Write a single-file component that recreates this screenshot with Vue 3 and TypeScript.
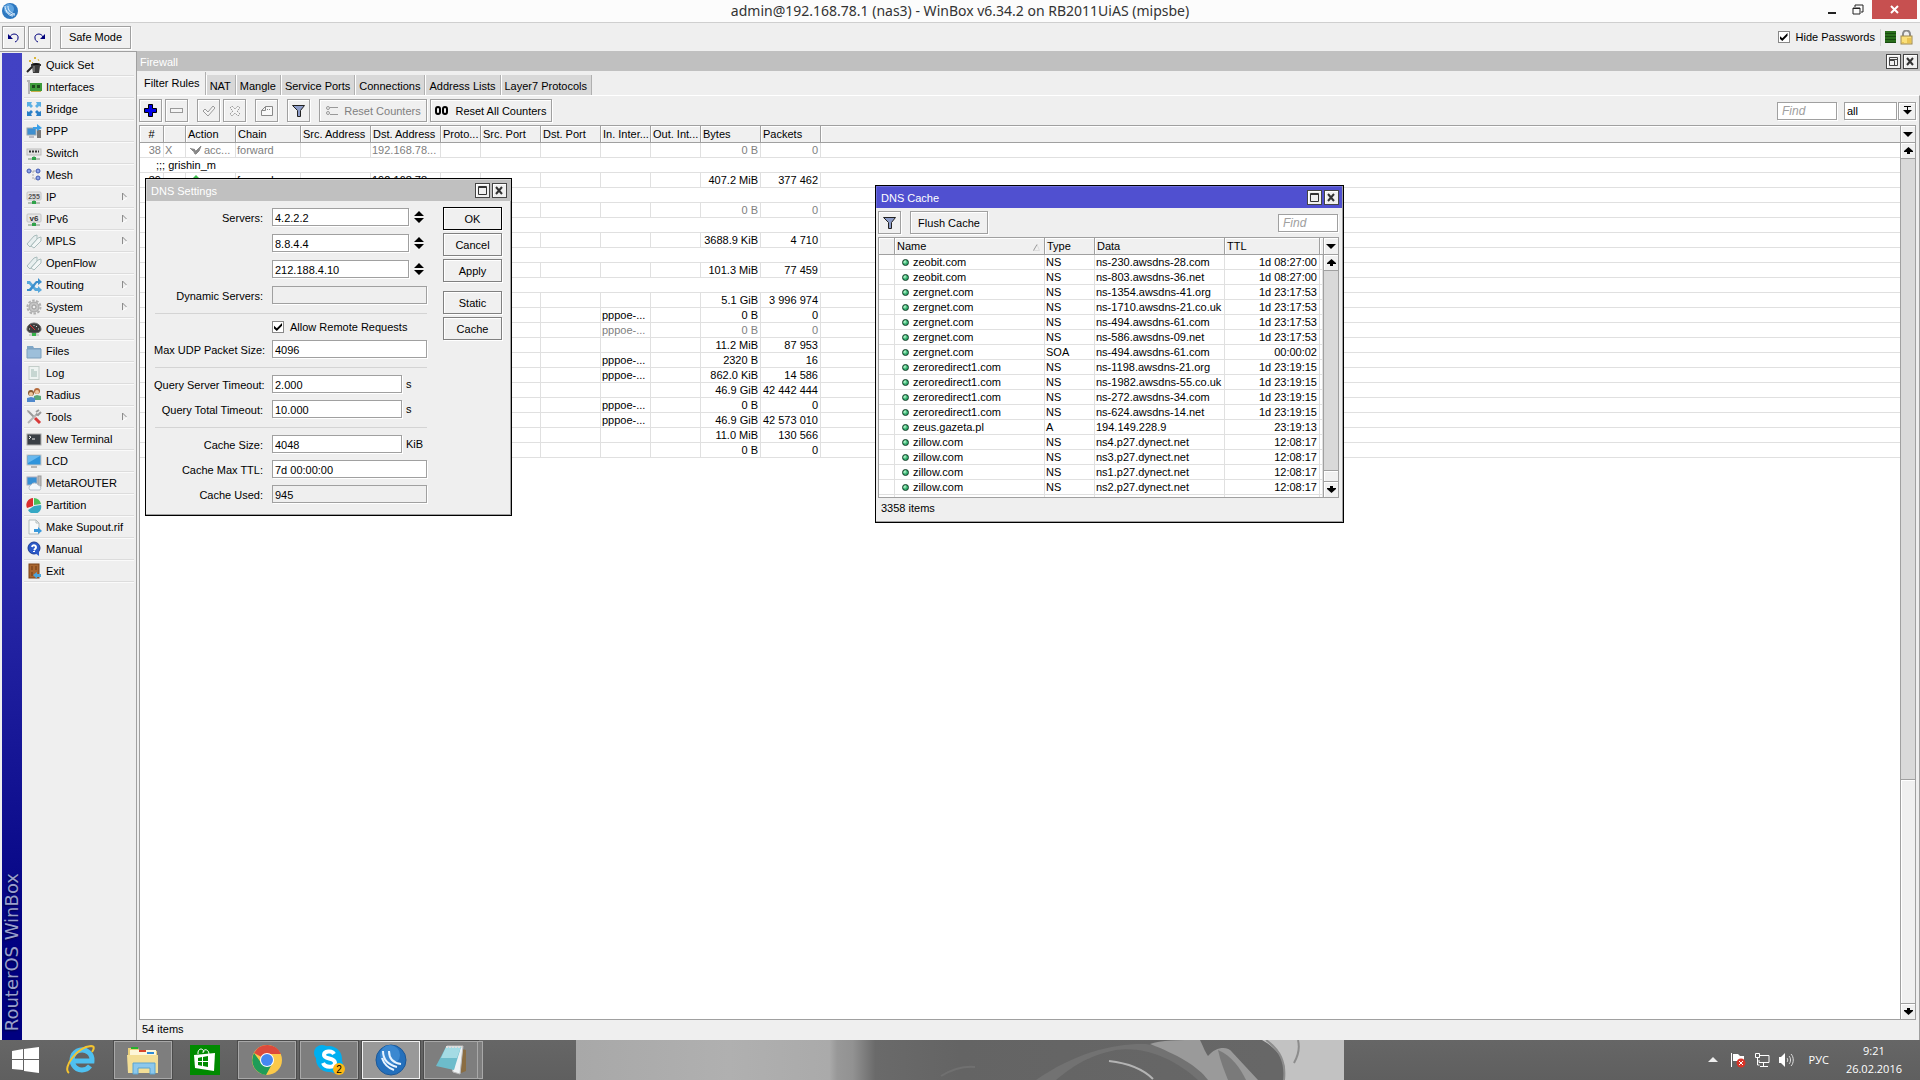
<script setup lang="ts">
import { ref } from 'vue'

interface MenuItem { label: string; icon: string; sub?: boolean }
interface Column { label: string; width?: number }
interface Rule {
  comment?: string
  disabled?: boolean
  cells?: string[]
  bytes?: string
  packets?: string
  iface?: string
}
interface DnsEntry { name: string; type: string; data: string; ttl: string }

const plug = '<path d="M8 11v3M2 14h4M10 14h4" stroke="#7a8f7a" stroke-width="1"/><rect x="6" y="12" width="4" height="3" fill="#2fa34a"/>'

const icons: Record<string, string> = {
  wand: '<path d="M1 15L7 9" stroke="#222" stroke-width="2"/><path d="M5 7h10v2h-1l-1 7H7L6 9H5z" fill="#3a3a3a"/><path d="M8 9v6" stroke="#999"/><ellipse cx="10" cy="7" rx="4" ry="1" fill="#111"/><path d="M3 4l1 1 1-1-1-1zM8 1l1 1 1-1-1-1zM6 5l1 1M12 2l1 2" stroke="#d8b53a" fill="#e9c94c"/>',
  card: '<path d="M1 2h2v13" fill="none" stroke="#b5b5b5" stroke-width="2"/><rect x="4" y="4" width="12" height="8" fill="#3d9a3a"/><path d="M6 6h3v3H6zM11 6h3v3h-3z" fill="#1c4a1c"/><path d="M5 12.500h10" stroke="#c9b04a"/>',
  bridge: '<g fill="#5bb0e4"><path d="M1 1h5L5 3l2 2-2 2-2-2-2 1z"/><path d="M15 1h-5l1 2-2 2 2 2 2-2 2 1z"/></g><g fill="#2a80c8"><path d="M1 15h5l-1-2 2-2-2-2-2 2-2-1z"/><path d="M15 15h-5l1-2-2-2 2-2 2 2 2-1z"/></g>',
  ppp: '<rect x="1" y="5" width="9" height="7" fill="#3e8fd0" stroke="#9aa5ad"/><path d="M3 14h5" stroke="#889"/><rect x="11" y="7" width="4" height="8" fill="#777"/><path d="M7 4h4V1l5 4-5 3V6H7z" fill="#3aa0e8"/>',
  switch: '<rect x="1" y="4" width="14" height="6" fill="#e2e2e2" stroke="#bbb"/><path d="M3 6.500h10" stroke="#333" stroke-width="2" stroke-dasharray="2 1"/>' + plug,
  mesh: '<path d="M4 4h8M7 4v8h5" fill="none" stroke="#aaa" stroke-dasharray="2 1"/><g fill="#8ea4e8" stroke="#4058b0"><circle cx="3" cy="4" r="2"/><circle cx="12" cy="4" r="2"/><circle cx="12" cy="11" r="2"/></g>',
  ip: '<rect x="1" y="3" width="14" height="8" rx="1" fill="#e6e6e6" stroke="#c4c4c4"/><text x="8" y="10" font-size="7" font-weight="700" text-anchor="middle" fill="#555">255</text>' + plug,
  ipv6: '<rect x="1" y="3" width="14" height="8" rx="1" fill="#e6e6e6" stroke="#c4c4c4"/><text x="8" y="10" font-size="8" font-weight="700" text-anchor="middle" fill="#333">v6</text>' + plug,
  tags: '<path d="M1 11L8 3l3-1v4l-7 8z" fill="#e8efef" stroke="#a9bcbc"/><path d="M5 13l7-8 3-1v4l-7 7z" fill="#f2f6f6" stroke="#a9bcbc"/>',
  routing: '<path d="M1 4h3l6 7h2V9l4 4-4 3v-2H9L3 7H1z" fill="#58a8dc"/><path d="M1 12h2l7-8h2V1l4 4-4 3V6h-1l-6 8H1z" fill="#3c8fcc"/>',
  gear: '<circle cx="8" cy="8" r="5" fill="#c4c4c4" stroke="#a4a4a4" stroke-width="1"/><circle cx="8" cy="8" r="6.500" fill="none" stroke="#b0b0b0" stroke-width="2" stroke-dasharray="2.500 1.500"/><circle cx="8" cy="8" r="2" fill="#eee" stroke="#999"/>',
  gauge: '<path d="M1 8a7 6 0 0 1 14 0c0 3-3 4-7 4s-7-1-7-4z" fill="#3c3c3c" stroke="#666"/><path d="M4 4l5 5" stroke="#e03030"/><path d="M3 8h1M12 8h1M8 4v1M11 5l-1 1" stroke="#ddd"/><path d="M3 14h10" stroke="#aaa"/><rect x="6" y="12" width="4" height="3" fill="#36b24a"/>',
  folder: '<path d="M1 3h6l1 2h7v10H1z" fill="#7fa6c6"/><path d="M1 6h14v9H1z" fill="#9dbfda" stroke="#7d9fbd"/>',
  log: '<path d="M3 1l1 1 1-1 1 1 1-1 1 1 1-1 1 1 1-1 1 1 1-1v14l-1-1-1 1-1-1-1 1-1-1-1 1-1-1-1 1-1-1-1 1z" fill="#eef3f1" stroke="#c3cdc9" stroke-width="1"/><path d="M5 5h3M5 7h6M5 9h6M5 11h6" stroke="#9fb9b2"/>',
  users: '<circle cx="11" cy="4" r="3" fill="#b4693a"/><circle cx="11" cy="5" r="2" fill="#f0c8a0"/><path d="M8 13V9l3-1 4 1v4z" fill="#5aa878"/><circle cx="5" cy="6" r="3" fill="#8a5a30"/><circle cx="5" cy="7" r="2" fill="#f0c8a0"/><path d="M1 15v-4l4-1 4 1v4z" fill="#4f88cc"/>',
  tools: '<path d="M3 3l5 5" stroke="#999" stroke-width="2"/><path d="M9 9l5 5" stroke="#d83a3a" stroke-width="3"/><path d="M2 14l9-9" stroke="#b5b5b5" stroke-width="2"/><path d="M10 3l3-2M15 3l-3 3-2-1" fill="none" stroke="#999" stroke-width="2"/><path d="M1 1l3 1-2 2z" fill="#999"/>',
  terminal: '<rect x="1" y="3" width="14" height="11" fill="#3a3f45" stroke="#aaa"/><path d="M3 5l2 1-2 2M6 8h3" fill="none" stroke="#eee"/>',
  lcd: '<rect x="1" y="2" width="14" height="10" fill="#2f94dc" stroke="#c4c4c4"/><path d="M2 3h12L2 10z" fill="#68b8ee"/><path d="M5 14h6" stroke="#b5b5b5" stroke-width="2"/>',
  meta: '<rect x="1" y="2" width="10" height="8" fill="#3790d4" stroke="#aab"/><rect x="12" y="1" width="3" height="10" fill="#bbb" stroke="#999"/><path d="M4 15a3 3 0 0 1 1-5 4 4 0 0 1 7 0 3 3 0 0 1 2 5z" fill="#f4f7fa" stroke="#b8c0cc"/>',
  pie: '<path d="M7 9L1 11A7 7 0 0 1 7 1z" fill="#dc2f2f"/><path d="M8 8V1a7 7 0 0 1 7 6z" fill="#4cc05a"/><path d="M8 9l7-1a7 7 0 0 1-13 5z" fill="#35a8c4"/>',
  file: '<path d="M3 1h7l3 3v11H3z" fill="#f8fafa" stroke="#b2bcbc"/><path d="M10 1v3h3" fill="none" stroke="#b2bcbc"/><path d="M8 10h4V8l4 4-4 3v-2H8z" fill="#3b9adc"/>',
  help: '<circle cx="8" cy="7" r="6" fill="#2b59c8" stroke="#1a3a94"/><path d="M9 12l4 3v-5z" fill="#2b59c8"/><path d="M6 6a2 2 0 1 1 3 2l-1 1M8 10v1" fill="none" stroke="#fff" stroke-width="2"/>',
  exit: '<rect x="3" y="1" width="10" height="14" fill="#a8652f" stroke="#7a4218"/><path d="M5 3h2v4H5zM9 3h2v4H9zM5 9h2v4H5z" fill="#8a4f22"/><path d="M15 11h-4V9l-4 3 4 4v-2h4z" fill="#4aa4dc"/>',
}

const menu: MenuItem[] = [
  { label: 'Quick Set', icon: 'wand' },
  { label: 'Interfaces', icon: 'card' },
  { label: 'Bridge', icon: 'bridge' },
  { label: 'PPP', icon: 'ppp' },
  { label: 'Switch', icon: 'switch' },
  { label: 'Mesh', icon: 'mesh' },
  { label: 'IP', icon: 'ip', sub: true },
  { label: 'IPv6', icon: 'ipv6', sub: true },
  { label: 'MPLS', icon: 'tags', sub: true },
  { label: 'OpenFlow', icon: 'tags' },
  { label: 'Routing', icon: 'routing', sub: true },
  { label: 'System', icon: 'gear', sub: true },
  { label: 'Queues', icon: 'gauge' },
  { label: 'Files', icon: 'folder' },
  { label: 'Log', icon: 'log' },
  { label: 'Radius', icon: 'users' },
  { label: 'Tools', icon: 'tools', sub: true },
  { label: 'New Terminal', icon: 'terminal' },
  { label: 'LCD', icon: 'lcd' },
  { label: 'MetaROUTER', icon: 'meta' },
  { label: 'Partition', icon: 'pie' },
  { label: 'Make Supout.rif', icon: 'file' },
  { label: 'Manual', icon: 'help' },
  { label: 'Exit', icon: 'exit' },
]

const tabs = ['Filter Rules', 'NAT', 'Mangle', 'Service Ports', 'Connections', 'Address Lists', 'Layer7 Protocols']
const activeTab = ref('Filter Rules')

const columns: Column[] = [
  { label: '#', width: 24 },
  { label: '', width: 22 },
  { label: 'Action', width: 50 },
  { label: 'Chain', width: 65 },
  { label: 'Src. Address', width: 70 },
  { label: 'Dst. Address', width: 70 },
  { label: 'Proto...', width: 40 },
  { label: 'Src. Port', width: 60 },
  { label: 'Dst. Port', width: 60 },
  { label: 'In. Inter...', width: 50 },
  { label: 'Out. Int...', width: 50 },
  { label: 'Bytes', width: 60 },
  { label: 'Packets', width: 60 },
  { label: '' },
]

const rules: Rule[] = [
  { disabled: true, cells: ['38', 'X', 'acc...', 'forward', '192.168.78...'], bytes: '0 B', packets: '0' },
  { comment: ';;; grishin_m' },
  { cells: ['39', '', 'acc...', 'forward', '192.168.78...'], bytes: '407.2 MiB', packets: '377 462' },
  { comment: '' },
  { disabled: true, bytes: '0 B', packets: '0' },
  { comment: '' },
  { bytes: '3688.9 KiB', packets: '4 710' },
  { comment: '' },
  { bytes: '101.3 MiB', packets: '77 459' },
  { comment: '' },
  { bytes: '5.1 GiB', packets: '3 996 974' },
  { iface: 'pppoe-...', bytes: '0 B', packets: '0' },
  { disabled: true, iface: 'pppoe-...', bytes: '0 B', packets: '0' },
  { bytes: '11.2 MiB', packets: '87 953' },
  { iface: 'pppoe-...', bytes: '2320 B', packets: '16' },
  { iface: 'pppoe-...', bytes: '862.0 KiB', packets: '14 586' },
  { bytes: '46.9 GiB', packets: '42 442 444' },
  { iface: 'pppoe-...', bytes: '0 B', packets: '0' },
  { iface: 'pppoe-...', bytes: '46.9 GiB', packets: '42 573 010' },
  { bytes: '11.0 MiB', packets: '130 566' },
  { bytes: '0 B', packets: '0' },
]

const entry = (name: string, type: string, data: string, ttl: string): DnsEntry => ({ name, type, data, ttl })
const dnsCache: DnsEntry[] = [
  entry('zeobit.com', 'NS', 'ns-230.awsdns-28.com', '1d 08:27:00'),
  entry('zeobit.com', 'NS', 'ns-803.awsdns-36.net', '1d 08:27:00'),
  entry('zergnet.com', 'NS', 'ns-1354.awsdns-41.org', '1d 23:17:53'),
  entry('zergnet.com', 'NS', 'ns-1710.awsdns-21.co.uk', '1d 23:17:53'),
  entry('zergnet.com', 'NS', 'ns-494.awsdns-61.com', '1d 23:17:53'),
  entry('zergnet.com', 'NS', 'ns-586.awsdns-09.net', '1d 23:17:53'),
  entry('zergnet.com', 'SOA', 'ns-494.awsdns-61.com', '00:00:02'),
  entry('zeroredirect1.com', 'NS', 'ns-1198.awsdns-21.org', '1d 23:19:15'),
  entry('zeroredirect1.com', 'NS', 'ns-1982.awsdns-55.co.uk', '1d 23:19:15'),
  entry('zeroredirect1.com', 'NS', 'ns-272.awsdns-34.com', '1d 23:19:15'),
  entry('zeroredirect1.com', 'NS', 'ns-624.awsdns-14.net', '1d 23:19:15'),
  entry('zeus.gazeta.pl', 'A', '194.149.228.9', '23:19:13'),
  entry('zillow.com', 'NS', 'ns4.p27.dynect.net', '12:08:17'),
  entry('zillow.com', 'NS', 'ns3.p27.dynect.net', '12:08:17'),
  entry('zillow.com', 'NS', 'ns1.p27.dynect.net', '12:08:17'),
  entry('zillow.com', 'NS', 'ns2.p27.dynect.net', '12:08:17'),
  entry('zodiac.ru', 'A', '184.150.85.175', '21:49:19'),
]

const servers = ref(['4.2.2.2', '8.8.4.4', '212.188.4.10'])
const maxUdp = ref('4096')
const queryServer = ref('2.000')
const queryTotal = ref('10.000')
const cacheSize = ref('4048')
const cacheTtl = ref('7d 00:00:00')
const hidePasswords = ref(true)
const allowRemote = ref(true)
</script>

<template>
  <div class="app">
    <header class="titlebar">
      <svg class="app-logo" viewBox="0 0 16 16"><circle cx="8" cy="8" r="8" fill="#2d78c0" /><circle cx="7" cy="6" r="5" fill="#5fa4e0" /><path d="M3 3c0 5 4 9 10 9M6 3c0 4 2 7 7 8M4 7c1 4 4 6 7 6" fill="none" stroke="#e4f2ff" stroke-width="1" /></svg>
      <h1>admin@192.168.78.1 (nas3) - WinBox v6.34.2 on RB2011UiAS (mipsbe)</h1>
      <div class="sys">
        <button aria-label="Minimize"><svg width="10" height="12"><rect x="1" y="8" width="8" height="2" fill="#222" /></svg></button>
        <button aria-label="Restore"><svg width="12" height="12"><path d="M1 4h7v6H1zM3 3V1h8v7H9" fill="none" stroke="#222" /><path d="M1 4.500h7" stroke="#222" /></svg></button>
        <button class="close" aria-label="Close"><svg width="10" height="10"><path d="M1 1l7 7M8 1l-7 7" stroke="#fff" stroke-width="2" /></svg></button>
      </div>
    </header>

    <div class="topbar">
      <button class="btn sq" aria-label="Undo"><svg width="13" height="11"><path d="M3 5c2-5 9-3 8 1 0 2-1 3-3 4" fill="none" stroke="#00007c" /><path d="M1 2v5h5z" fill="#00007c" /></svg></button>
      <button class="btn sq" aria-label="Redo"><svg width="13" height="11"><path d="M10 5c-2-5-9-3-8 1 0 2 1 3 3 4" fill="none" stroke="#00007c" /><path d="M12 2v5H7z" fill="#00007c" /></svg></button>
      <button class="btn safe">Safe Mode</button>
      <div class="topright">
        <label class="check"><input v-model="hidePasswords" type="checkbox" /><span>Hide Passwords</span></label>
        <i class="vsep"></i>
        <svg class="load" width="11" height="12"><rect width="11" height="12" fill="#2a6e1c" /><path d="M0 2.500h11M0 5.500h11M0 8.500h11M0 11.500h11" stroke="#194a10" /></svg>
        <svg width="13" height="15"><path d="M3 7V4a3 3 0 0 1 7 0v3" fill="none" stroke="#8c8c8c" stroke-width="2" /><rect x="1" y="6" width="11" height="8" fill="#fbe07a" stroke="#a08a50" /><path d="M8 8v5M10 8v5M3 12v1" stroke="#d9a92c" /></svg>
      </div>
    </div>

    <div class="body">
      <aside class="side">
        <div class="brand"><span>RouterOS WinBox</span></div>
        <nav>
          <a v-for="m in menu" :key="m.label" href="#">
            <svg class="mi" viewBox="0 0 16 16" v-html="icons[m.icon]"></svg>
            <span>{{ m.label }}</span>
            <svg v-if="m.sub" class="sub" width="7" height="10"><path d="M1.500 9V1l4 4" fill="none" stroke="#8c8c8c" /><path d="M6 6L1 9" stroke="#fff" /></svg>
          </a>
        </nav>
      </aside>

      <main>
        <div class="fw-title">
          <span>Firewall</span>
          <button class="wbtn" aria-label="Restore window"><svg width="11" height="11"><path d="M1.500 1.500h8v8h-8zM1.500 4.500h5v5M1 3.500h9" fill="none" stroke="#444" /></svg></button>
          <button class="wbtn" aria-label="Close window"><svg width="11" height="11"><path d="M2 2l6 7M8 2L2 9" stroke="#333" stroke-width="2" /></svg></button>
        </div>
        <div class="tabs" role="tablist">
          <button v-for="t in tabs" :key="t" role="tab" :class="{ active: t === activeTab }" @click="activeTab = t">{{ t }}</button>
        </div>
        <section class="page">
          <div class="tools">
            <button class="btn sq" aria-label="Add"><svg width="13" height="13"><path d="M4.500.5h4v4h4v4h-4v4h-4v-4h-4v-4h4z" fill="#0000e8" stroke="#000" /></svg></button>
            <button class="btn sq" aria-label="Remove"><svg width="13" height="5"><rect x=".5" y=".5" width="12" height="4" fill="#f4f4f4" stroke="#999" /></svg></button>
            <button class="btn sq g" aria-label="Enable"><svg width="13" height="12"><path d="M1 6l2-2 3 3 5-6 2 2-7 8z" fill="#f4f4f4" stroke="#999" /></svg></button>
            <button class="btn sq" aria-label="Disable"><svg width="12" height="12"><path d="M1 3l2-2 3 3 3-3 2 2-3 3 3 3-2 2-3-3-3 3-2-2 3-3z" fill="#f4f4f4" stroke="#999" stroke-dasharray="2 1" /></svg></button>
            <button class="btn sq g" aria-label="Comment"><svg width="14" height="12"><path d="M1.500 5.500l4-4h7v9h-11zM1.500 5.500h4v-4" fill="#f8f8f8" stroke="#888" /><path d="M7 4.500h4" stroke="#888" stroke-dasharray="1 1" /></svg></button>
            <button class="btn sq g" aria-label="Filter"><svg width="13" height="13"><path d="M.5 1.500h12l-4 5v6h-3v-6z" fill="#8c9cc8" stroke="#222" /></svg></button>
            <button class="btn reset g dim"><svg width="13" height="11"><path d="M5 2.500h8M5 9.500h8" stroke="#999" /><circle cx="3" cy="3" r="1.500" fill="none" stroke="#999" /><circle cx="3" cy="8" r="1.500" fill="none" stroke="#999" /></svg>Reset Counters</button>
            <button class="btn reset-all"><svg width="14" height="9"><rect x="1" y="1" width="4" height="7" rx="2" fill="none" stroke="#000" stroke-width="2" /><rect x="8" y="1" width="4" height="7" rx="2" fill="none" stroke="#000" stroke-width="2" /></svg>Reset All Counters</button>
            <div class="find-group">
              <input class="find" type="text" placeholder="Find" aria-label="Find rule" />
              <select aria-label="Chain filter"><option>all</option></select>
              <button class="btn drop" aria-label="Choose chain"><svg width="9" height="9"><path d="M1 .5h7M4.500 1v4" stroke="#000" /><path d="M0 4h9L4.500 8.500z" fill="#000" /></svg></button>
            </div>
          </div>

          <div class="grid-area">
            <div class="grid-clip">
              <table class="grid">
                <colgroup><col v-for="(c, i) in columns" :key="i" :style="c.width ? { width: c.width + 'px' } : {}" /></colgroup>
                <thead><tr><th v-for="(c, i) in columns" :key="i">{{ c.label }}</th></tr></thead>
                <tbody>
                  <tr v-for="(r, i) in rules" :key="i" :class="{ off: r.disabled }">
                    <td v-if="r.comment !== undefined" :colspan="columns.length" class="comment">{{ r.comment }}</td>
                    <template v-else>
                      <td class="num">{{ r.cells?.[0] }}</td>
                      <td>{{ r.cells?.[1] }}</td>
                      <td>
                        <svg v-if="r.cells" class="act" width="13" height="10"><path v-if="r.disabled" d="M1 3l3 3 2-2M6 9L4 5l3 1 5-5-2 5-3 3z" fill="#888" stroke="#888" /><path v-else d="M4 3l3-3 3 3-2 5H6z" fill="#3fbf4f" /></svg>{{ r.cells?.[2] }}
                      </td>
                      <td>{{ r.cells?.[3] }}</td>
                      <td></td>
                      <td>{{ r.cells?.[4] }}</td>
                      <td></td>
                      <td></td>
                      <td></td>
                      <td>{{ r.iface }}</td>
                      <td></td>
                      <td class="num">{{ r.bytes }}</td>
                      <td class="num">{{ r.packets }}</td>
                      <td class="rest"></td>
                    </template>
                  </tr>
                </tbody>
              </table>
            </div>
            <div class="scroll">
              <button class="cols" aria-label="Columns"><svg width="10" height="5"><path d="M0 0h10L5 5z" /></svg></button>
              <button aria-label="Scroll up"><svg width="9" height="7"><path d="M4.500 0L9 4v1H6v2H3V5H0V4z" /></svg></button>
              <div class="track"><div class="thumb"></div></div>
              <button aria-label="Scroll down"><svg width="9" height="7"><path d="M4.500 7L9 3V2H6V0H3v2H0v1z" /></svg></button>
            </div>
          </div>
          <div class="status">54 items</div>
        </section>

        <section class="win settings">
          <div class="win-title">
            <span>DNS Settings</span>
            <button class="wbtn" aria-label="Maximize"><svg width="11" height="11"><path d="M1.500 1.500h8v8h-8zM1 2.500h9" fill="none" stroke="#333" /></svg></button>
            <button class="wbtn" aria-label="Close"><svg width="11" height="11"><path d="M2 2l6 7M8 2L2 9" stroke="#333" stroke-width="2" /></svg></button>
          </div>
          <div class="form">
            <form class="fields" @submit.prevent>
              <div v-for="(s, i) in servers" :key="i" class="row">
                <label :for="'srv' + i">{{ i === 0 ? 'Servers:' : '' }}</label>
                <input :id="'srv' + i" v-model="servers[i]" class="w-srv" type="text" :aria-label="'Server ' + (i + 1)" />
                <span class="spin"><svg width="10" height="12"><path d="M0 5h10L5 0zM0 7h10L5 12z" /></svg></span>
              </div>
              <div class="row"><label for="dyn">Dynamic Servers:</label><input id="dyn" class="w-full" type="text" readonly /></div>
              <hr />
              <div class="row allow"><label class="check"><input v-model="allowRemote" type="checkbox" /><span>Allow Remote Requests</span></label></div>
              <div class="row"><label for="udp">Max UDP Packet Size:</label><input id="udp" v-model="maxUdp" class="w-full" type="text" /></div>
              <hr />
              <div class="row mid"><label for="qs">Query Server Timeout:</label><input id="qs" v-model="queryServer" class="w-unit" type="text" /><span class="unit">s</span></div>
              <div class="row"><label for="qt">Query Total Timeout:</label><input id="qt" v-model="queryTotal" class="w-unit" type="text" /><span class="unit">s</span></div>
              <hr />
              <div class="row mid"><label for="cs">Cache Size:</label><input id="cs" v-model="cacheSize" class="w-unit" type="text" /><span class="unit">KiB</span></div>
              <div class="row mid"><label for="ct">Cache Max TTL:</label><input id="ct" v-model="cacheTtl" class="w-full" type="text" /></div>
              <div class="row"><label for="cu">Cache Used:</label><input id="cu" class="w-full" type="text" readonly value="945" /></div>
            </form>
            <div class="actions">
              <button class="btn default">OK</button>
              <button class="btn">Cancel</button>
              <button class="btn">Apply</button>
              <button class="btn split">Static</button>
              <button class="btn">Cache</button>
            </div>
          </div>
        </section>

        <section class="win cache">
          <div class="win-title">
            <span>DNS Cache</span>
            <button class="wbtn" aria-label="Maximize"><svg width="11" height="11"><path d="M1.500 1.500h8v8h-8zM1 2.500h9" fill="none" stroke="#333" /></svg></button>
            <button class="wbtn" aria-label="Close"><svg width="11" height="11"><path d="M2 2l6 7M8 2L2 9" stroke="#333" stroke-width="2" /></svg></button>
          </div>
          <div class="cache-tools">
            <button class="btn sq" aria-label="Filter"><svg width="13" height="13"><path d="M.5 1.500h12l-4 5v6h-3v-6z" fill="#8c9cc8" stroke="#222" /></svg></button>
            <button class="btn flush g">Flush Cache</button>
            <input class="find" type="text" placeholder="Find" aria-label="Find entry" />
          </div>
          <div class="grid-area">
            <div class="grid-clip">
              <table class="grid">
                <colgroup><col style="width: 16px" /><col style="width: 150px" /><col style="width: 50px" /><col style="width: 130px" /><col style="width: 95px" /><col /></colgroup>
                <thead>
                  <tr>
                    <th></th>
                    <th>Name<svg class="sort" width="7" height="7"><path d="M.5 6.500h6L4 .5" fill="none" stroke="#ddd" /><path d="M.5 6.500L4 .5" stroke="#999" /></svg></th>
                    <th>Type</th><th>Data</th><th>TTL</th><th></th>
                  </tr>
                </thead>
                <tbody>
                  <tr v-for="(d, i) in dnsCache" :key="i">
                    <td></td>
                    <td class="name"><i class="dot"></i>{{ d.name }}</td>
                    <td>{{ d.type }}</td><td>{{ d.data }}</td><td class="num">{{ d.ttl }}</td><td></td>
                  </tr>
                </tbody>
              </table>
            </div>
            <div class="scroll">
              <button class="cols" aria-label="Columns"><svg width="10" height="5"><path d="M0 0h10L5 5z" /></svg></button>
              <button aria-label="Scroll up"><svg width="9" height="7"><path d="M4.500 0L9 4v1H6v2H3V5H0V4z" /></svg></button>
              <div class="track"><div class="thumb small"></div></div>
              <button aria-label="Scroll down"><svg width="9" height="7"><path d="M4.500 7L9 3V2H6V0H3v2H0v1z" /></svg></button>
            </div>
          </div>
          <div class="cache-status">3358 items</div>
        </section>
      </main>
    </div>

    <footer class="taskbar">
      <button class="task bare start" aria-label="Start"><svg width="27" height="26"><path d="M0 4l11-2v10H0zM12 2l15-2v12H12zM0 13h11v10L0 22zM12 13h15v13l-15-2z" fill="#fff" /></svg></button>
      <button class="task bare ie" aria-label="Internet Explorer"><svg width="32" height="32" viewBox="0 0 32 32"><path d="M25 22A10 10 0 1 1 27 17H9" fill="none" stroke="#4fc0f0" stroke-width="5" /><path d="M4 29C-3 24 12 3 26 2c4 0 3 3 1 6" fill="none" stroke="#f4c430" stroke-width="2" /></svg></button>
      <button class="task" aria-label="File Explorer"><svg width="34" height="30" viewBox="0 0 34 30"><path d="M2 3h10l2 3h17v22H2z" fill="#e9cf7a" /><path d="M4 5h26v5H4z" fill="#fdf6d8" /><path d="M5 2h7v2H5z" fill="#26b02c" /><path d="M13 5h7v2h-7z" fill="#d8452c" /><path d="M21 7h7v2h-7z" fill="#2c8bd8" /><path d="M1 10h31v18H2z" fill="#f3de96" /><path d="M7 29V18h22v11h-5v-6H12v6z" fill="#8cc8ec" stroke="#5aa4d0" /></svg></button>
      <button class="task bare" aria-label="Store"><svg width="30" height="30"><rect width="30" height="30" fill="#008a00" /><path d="M8 9V7c1-4 5-4 6 0M13 8c0-5 6-4 6 1" fill="none" stroke="#fff" stroke-width="1" /><path d="M4 10l21-2-1 18-19-3z" fill="#fff" /><path d="M8 13l4-1v4H8zM13 12l5-1v5h-5zM8 17h4v4l-4-1zM13 17h5v5l-5-1z" fill="#008a00" /></svg></button>
      <button class="task" aria-label="Chrome"><svg width="30" height="30" viewBox="0 0 30 30"><circle cx="15" cy="15" r="15" fill="#fbc94a" /><path d="M15 15L2 8A15 15 0 0 1 29 9H15z" fill="#dc4a3c" /><path d="M2 8a15 15 0 0 0 12 22l6-11-10 0z" fill="#1f9c58" /><circle cx="15" cy="15" r="7" fill="#fff" /><circle cx="15" cy="15" r="6" fill="#4688f0" /></svg></button>
      <button class="task" aria-label="Skype"><svg width="32" height="32" viewBox="0 0 32 32"><circle cx="9" cy="9" r="8" fill="#00aff0" /><circle cx="16" cy="15" r="13" fill="#00aff0" /><circle cx="22" cy="21" r="8" fill="#00aff0" /><path d="M21 10c-2-4-10-3-10 1 0 5 11 2 11 8 0 5-10 5-12 0" fill="none" stroke="#fff" stroke-width="4" /><circle cx="26" cy="25" r="6" fill="#fdb813" /><text x="26" y="29" font-size="10" text-anchor="middle">2</text></svg></button>
      <button class="task on" aria-label="WinBox"><svg width="32" height="32" viewBox="0 0 32 32"><circle cx="16" cy="16" r="15" fill="#2470bc" stroke="#1c5898" /><circle cx="15" cy="11" r="10" fill="#3b88d0" /><path d="M8 7c0 9 6 14 14 16M14 7c0 7 4 12 12 13M7 14c2 6 6 10 12 12" fill="none" stroke="#e8f4ff" stroke-width="2" /></svg></button>
      <button class="task note" aria-label="Notepad"><svg width="32" height="30" viewBox="0 0 32 30"><path d="M27 4l4 1v21l-5 2z" fill="#8a6d42" /><path d="M12 1h16l-3 28-7-2z" fill="#eef2f4" stroke="#bbb" /><path d="M11 2h15l-7 23L1 21z" fill="#6dbccb" /><path d="M11 2h15l-4 11H6z" fill="#a4dbe4" /><path d="M11 2h16" stroke="#ddd" stroke-width="2" stroke-dasharray="2 1" /></svg></button>
      <i class="stack"></i>
      <svg class="wall" viewBox="0 0 768 40" preserveAspectRatio="none">
        <defs>
          <linearGradient id="wall"><stop offset="0" stop-color="#a8a8a8" /><stop offset=".2" stop-color="#b0b0b0" /><stop offset=".33" stop-color="#aaa" /><stop offset=".34" stop-color="#989898" /><stop offset=".36" stop-color="#929292" /><stop offset=".39" stop-color="#6a6a6a" /><stop offset=".5" stop-color="#646464" /><stop offset=".9" stop-color="#676767" /></linearGradient>
        </defs>
        <rect width="768" height="40" fill="url(#wall)" />
        <path d="M460 40C500 12 540 3 570 4c28 4 52 20 70 36h-18C600 20 570 6 540 10c-30 6-45 18-60 30z" fill="#727272" />
        <path d="M574 4c10-4 30-4 50-4 4 8 4 10 8 16 8-10 20-10 24-4l26 28h-50C622 26 600 14 574 4z" fill="#9a9a9a" />
        <path d="M642 10c14 6 22 18 28 30h-18c-4-10-8-20-10-30z" fill="#7a7a7a" />
        <path d="M533 21c18 2 34 8 44 18" fill="none" stroke="#b4b4b4" stroke-width="2" />
        <path d="M365 36c10-6 22-10 34-9" fill="none" stroke="#707070" stroke-width="2" />
        <path d="M708 40c4-16-4-30-22-40h82v40z" fill="#c2c2c2" />
        <path d="M690 0c14 10 20 22 18 40M722 0c2 8 0 16-4 23" fill="none" stroke="#8c8c8c" stroke-width="2" />
      </svg>
      <div class="tray">
        <svg width="10" height="6"><path d="M0 5l5-5 5 5z" fill="#eee" /></svg>
        <svg width="16" height="16"><path d="M1.500 1v14" stroke="#fff" /><path d="M3 2h5l2 2h4v7H8l-1-2H3z" fill="#fff" /><circle cx="11" cy="11" r="4.500" fill="#d83428" /><path d="M9 9l4 4M13 9l-4 4" stroke="#fff" /></svg>
        <svg width="16" height="16"><path d="M6 3.500h9v7H5V8M9.500 11v3M6 14.500h8" fill="none" stroke="#fff" stroke-width="1" /><path d="M1.500 1.500h4v4h-4zM3.500 6v7h2" fill="none" stroke="#fff" /></svg>
        <svg width="16" height="16"><path d="M1 5h2l4-4v14l-4-4H1z" fill="#fff" /><path d="M9 6c1 1 1 3 0 4M11 4c2 2 2 6 0 8M13 2c3 3 3 9 0 12" fill="none" stroke="#ddd" /></svg>
        <span class="lang">РУС</span>
        <div class="clock"><span>9:21</span><span>26.02.2016</span></div>
      </div>
    </footer>
  </div>
</template>

<style>
body { margin: 0; background: #efefef; }
</style>

<style scoped>
* { box-sizing: border-box; }
.app { height: 100vh; display: flex; flex-direction: column; overflow: hidden; background: #efefef; color: #000; font: 11px/14px "Liberation Sans", Arial, sans-serif; }
button, input, select { font: inherit; color: inherit; margin: 0; padding: 0; border-radius: 0; }
button { display: flex; align-items: center; justify-content: center; white-space: nowrap; }
svg { display: block; flex: none; }

.titlebar { flex: none; height: 23px; display: flex; align-items: center; background: #fcfcfc; border-bottom: 1px solid #cfcfcf; position: relative; }
.app-logo { width: 16px; height: 16px; margin: 0 -18px 0 2px; }
h1 { margin: 0; flex: 1; text-align: center; font: 400 14px/22px "Noto Sans", "Open Sans", sans-serif; color: #333; }
.sys { display: flex; position: absolute; right: 3px; top: 0; }
.sys button { width: 26px; height: 19px; border: 0; background: none; }
.sys .close { width: 45px; margin-left: 1px; background: #c75050; }

.topbar { flex: none; height: 28px; display: flex; align-items: center; gap: 3px; padding: 0 3px 0 2px; }
.btn { height: 23px; background: #f0f0f0; border: 1px solid #a0a0a0; box-shadow: inset 1px 1px #fff, 1px 1px #fff; }
.btn.sq { width: 23px; }
.safe { width: 71px; margin-left: 6px; }
.topright { margin-left: auto; display: flex; align-items: center; padding-right: 4px; }
.check { display: flex; align-items: center; gap: 6px; }
.check input { appearance: none; width: 12px; height: 12px; background: #fff; border: 1px solid #888; display: block; }
.check input:checked::before { content: ""; display: block; width: 8px; height: 8px; margin: 1px; background: #000; clip-path: polygon(0 35%, 35% 65%, 100% 0, 100% 35%, 35% 100%, 0 70%); }
.vsep { width: 1px; height: 17px; background: #d4d4d4; margin: 0 4px 0 5px; }
.load { margin-right: 4px; }

.body { flex: 1; min-height: 0; display: flex; }
.side { flex: none; width: 137px; display: flex; border-top: 1px solid #a0a0a0; border-right: 1px solid #a0a0a0; padding: 1px 0 0 2px; }
.brand { width: 20px; display: flex; align-items: flex-end; justify-content: center; background: linear-gradient(#4242c4, #4040c0 30%, #000080 92%); }
.brand span { writing-mode: vertical-rl; transform: rotate(180deg); font: 18px/20px "DejaVu Sans", sans-serif; color: #9aa0cc; padding-top: 9px; white-space: nowrap; text-shadow: -1px -1px 2px #000040; }
nav { flex: 1; padding: 1px 2px 0; }
nav a { display: flex; align-items: center; height: 22px; padding: 0 6px 0 2px; gap: 4px; color: #000; text-decoration: none; border-bottom: 1px solid #dcdcdc; box-shadow: 0 1px #fafafa; white-space: nowrap; }
.mi { width: 16px; height: 16px; }
.sub { margin-left: auto; }

main { flex: 1; min-width: 0; display: flex; flex-direction: column; position: relative; }
.fw-title { flex: none; height: 20px; display: flex; align-items: center; gap: 2px; padding: 0 2px 0 3px; background: #c0c0c0; color: #fff; }
.fw-title span, .win-title span { flex: 1; padding-top: 1px; }
.wbtn { width: 15px; height: 15px; background: #f0f0f0; border: 1px solid #444; box-shadow: inset 1px 1px #fff; }
.tabs { flex: none; height: 24px; padding-left: 1px; display: flex; align-items: flex-end; }
.tabs button { height: 20px; padding: 2px 4px 0 3px; border: 0; border-right: 1px solid #b0b0b0; border-left: 1px solid #fff; background: #d8d8d8; }
.tabs .active { height: 23px; padding: 0 5px 2px 6px; background: #f0f0f0; border-left: 0; }
.page { flex: 1; min-height: 0; display: flex; flex-direction: column; border-right: 1px solid #a0a0a0; border-top: 1px solid #fff; padding: 0 2px; }
.tools { flex: none; height: 29px; display: flex; align-items: center; gap: 3px; padding-right: 1px; }
.tools .g, .cache-tools .g { margin-left: 6px; }
.dim { color: #808080; }
.reset, .reset-all { gap: 6px; }
.reset { width: 108px; }
.reset-all { width: 122px; }
.find-group { margin-left: auto; display: flex; align-items: center; }
input[type="text"], select { height: 18px; border: 1px solid #a0a0a0; background: #fff; padding: 1px 2px 0; box-shadow: 1px 1px #fff; outline: 0; }
input[readonly] { background: #efefef; }
.find { width: 60px; }
input.find { padding-left: 4px; }
.find::placeholder { color: #a0a0a0; font-style: italic; font-size: 12px; opacity: 1; }
select { appearance: none; width: 53px; margin-left: 7px; }
.drop { width: 18px; height: 18px; margin-left: 1px; }

.grid-area { flex: 1; min-height: 0; display: flex; border: 1px solid #a0a0a0; border-right: 0; background: #fff; }
.page .grid-area { margin-right: 1px; }
.grid-clip { flex: 1; min-width: 0; overflow: hidden; }
.grid { width: 100%; table-layout: fixed; border-collapse: separate; border-spacing: 0; }
.grid th { height: 17px; padding: 1px 0 0 2px; text-align: left; font-weight: 400; line-height: 15px; background: #f0f0f0; border-right: 1px solid #a0a0a0; border-bottom: 1px solid #a0a0a0; box-shadow: inset 1px 1px #fff; overflow: hidden; white-space: nowrap; }
.page .grid th:first-child { text-align: center; padding: 1px 0 0; }
.grid th:last-child { border-right: 0; }
.grid td { height: 15px; padding: 0 2px 0 1px; line-height: 14px; border-right: 1px solid #e0e0e0; border-bottom: 1px solid #e0e0e0; overflow: hidden; white-space: nowrap; }
.grid .comment { border-right: 0; padding-left: 16px; }
.grid .rest { border-right: 0; }
.grid .num { text-align: right; }
.off td { color: #808080; }
.act { display: inline-block; vertical-align: -1px; margin: 0 2px 0 2px; }
.scroll { flex: none; width: 16px; display: flex; flex-direction: column; border-left: 1px solid #a0a0a0; border-right: 1px solid #a0a0a0; background: #d9d9d9; }
.scroll button { flex: none; height: 16px; border: 0; border-bottom: 1px solid #a0a0a0; background: #f0f0f0; box-shadow: inset 1px 1px #fff; }
.scroll button.cols { height: 17px; }
.scroll button:last-child { height: 15px; border-bottom: 0; }
.track { flex: 1; display: flex; flex-direction: column; }
.thumb { margin-top: auto; height: 26.6%; background: #f0f0f0; border: solid #a0a0a0; border-width: 1px 0; box-shadow: inset 1px 1px #fff; }
.thumb.small { height: 12px; }
.status { flex: none; height: 20px; padding: 2px 3px 0; }

.win { position: absolute; display: flex; flex-direction: column; background: #efefef; border: 1px solid #000; box-shadow: inset -1px -1px #a0a0a0; }
.settings { left: 8px; top: 127px; width: 367px; height: 338px; }
.cache { left: 738px; top: 134px; width: 469px; height: 338px; padding: 0 4px 2px 2px; }
.win-title { flex: none; height: 22px; display: flex; align-items: center; gap: 2px; padding: 0 4px; background: #c0c0c0; color: #fff; border: solid #d4d4d4; border-width: 1px 0 0 1px; }
.cache .win-title { background: #5050d0; border-color: #7070dc; margin: 0 -3px 0 -2px; padding-right: 3px; }
.form { flex: 1; display: flex; padding: 6px 9px 0 8px; }
.fields { width: 273px; margin-top: 1px; }
.row { display: flex; align-items: center; margin-bottom: 8px; }
.row > label:not(.check) { width: 109px; margin-right: 9px; padding-top: 1px; text-align: right; white-space: nowrap; }
.row.mid { margin-bottom: 7px; }
.row.allow { height: 12px; padding-left: 118px; margin-bottom: 7px; }
.w-srv { width: 137px; }
.w-full { width: 155px; }
.w-unit { width: 130px; }
.spin { margin-left: 5px; }
.unit { margin-left: 4px; }
hr { height: 1px; margin: 9px 0 7px 1px; border: 0; background: #d4d4d4; }
.row:has(+ hr) { margin-bottom: 0; }
.actions { margin-left: auto; display: flex; flex-direction: column; gap: 3px; }
.actions .btn { width: 59px; border-color: #808080; }
.actions .default { border-color: #000; }
.actions .split { margin-top: 6px; }
.cache-tools { flex: none; height: 29px; display: flex; align-items: center; gap: 3px; padding-right: 1px; }
.flush { width: 78px; }
.cache-tools .find { margin-left: auto; }
.cache-status { flex: none; height: 22px; padding: 3px; }
.sort { float: right; margin: 5px 4px 0 0; }
.grid .name { padding-left: 7px; }
.dot { display: inline-block; width: 7px; height: 7px; margin-right: 4px; border-radius: 50%; border: 1px solid #0a3a20; background: radial-gradient(circle at 35% 35%, #c8ffd8, #35b070 50%); }

.taskbar { flex: none; height: 40px; display: flex; align-items: center; background: linear-gradient(#666, #5f5f5f); color: #fff; overflow: hidden; }
.task { flex: none; width: 58px; height: 38px; margin-right: 4px; border: 1px solid #a8a8a8; background: #7e7e7e; outline: 1px solid #4c4c4c; }
.task.bare { border: 0; background: none; outline: 0; }
.start.task { width: 50px; margin-right: 0; }
.ie.task { width: 62px; margin-right: 2px; }
.task.on { background: #999; border-color: #f0f0f0; }
.task.note { width: 54px; margin-right: 0; }
.stack { width: 5px; height: 38px; border: 1px solid #a8a8a8; border-left: 0; background: #7e7e7e; }
.wall { width: 40%; height: 40px; margin-left: 93px; flex: 0 1 auto; }
.tray { margin-left: auto; display: flex; align-items: center; gap: 8px; padding-right: 18px; font: 11px/18px "Open Sans", "Noto Sans", sans-serif; }
.tray svg:first-child { margin-right: 4px; }
.lang { margin-left: 7px; }
.clock { display: flex; flex-direction: column; align-items: center; margin-left: 9px; }
</style>
